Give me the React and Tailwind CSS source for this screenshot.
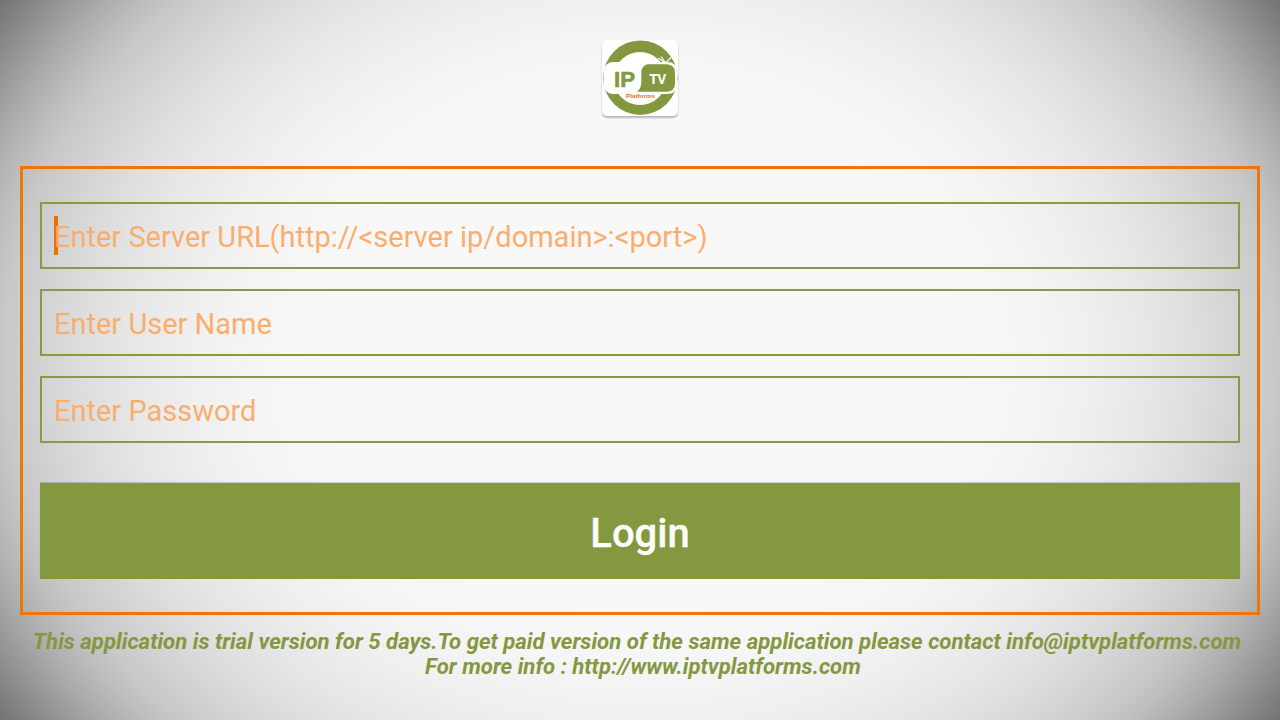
import React, { useState } from "react";

const FIELDS = [
  { name: "server", type: "text", placeholder: "Enter Server URL(http://<server ip/domain>:<port>)" },
  { name: "username", type: "text", placeholder: "Enter User Name" },
  { name: "password", type: "password", placeholder: "Enter Password" },
];

function Logo() {
  return (
    <div className="h-[76px] w-[76px] overflow-hidden rounded-[5px] bg-white shadow-[0_2px_2px_rgba(0,0,0,0.25)]">
      <svg viewBox="0 0 76 76" className="h-full w-full" fontFamily="Liberation Sans, sans-serif" fontWeight="700">
        <circle cx="38.3" cy="37.7" r="37.2" fill="#84983f" />
        <circle cx="38" cy="38.5" r="26.5" fill="#fff" />
        <rect x="1.7" y="22" width="50" height="32" rx="9" fill="#fff" />
        <path d="M46 22 H65 Q75 22 75 31.5 V44 Q75 54 65 54 H34 Z" fill="#fff" />
        <path
          d="M56.5 18 L63.5 23 M59 16.5 L63 22 M70 16.5 L63.5 23"
          fill="none"
          stroke="#fff"
          strokeWidth="1.1"
        />
        <path
          d="M45.5 24.3 H64.5 Q73 24.8 73 32.5 V43.5 Q73 51.7 64 51.7 H35 Q39.3 48.5 39.3 42 V31 Q40 26 45.5 24.3 Z"
          fill="#84983f"
        />
        <text x="12" y="47" fontSize="22.5" textLength="21" lengthAdjust="spacingAndGlyphs" fill="#84983f" stroke="#84983f" strokeWidth="0.6">
          IP
        </text>
        <text x="47.5" y="44.3" fontSize="14" textLength="16.5" lengthAdjust="spacingAndGlyphs" fill="#fff" stroke="#fff" strokeWidth="0.2">
          TV
        </text>
        <text x="24" y="57.8" fontSize="6.2" textLength="29" lengthAdjust="spacingAndGlyphs" fill="#f26a24">
          Platforms
        </text>
      </svg>
    </div>
  );
}

export default function App() {
  const [form, setForm] = useState({ server: "", username: "", password: "" });

  function onChange(e) {
    setForm({ ...form, [e.target.name]: e.target.value });
  }

  return (
    <div className="flex h-[720px] w-[1280px] flex-col items-center overflow-hidden bg-[radial-gradient(777px_634px_at_center,#f8f8f8_0%,#f8f8f8_40%,#f5f5f5_49%,#f0f0f0_57%,#e6e6e6_66%,#dddddd_72%,#d3d3d3_77%,#c8c8c8_82%,#bebebe_85%,#a8a8a8_90%,#7e7e7e_98%,#747474_100%)] pt-10 font-[Roboto,sans-serif]">
      <Logo />

      <form
        onSubmit={(e) => e.preventDefault()}
        className="mt-[50px] flex h-[449px] w-[1240px] flex-col border-[3px] border-[#ee7608] px-[17px] pt-[33px]"
      >
        <div className="flex flex-col gap-5">
          {FIELDS.map((f) => (
            <div key={f.name} className="relative h-[67px] border-2 border-[#869b42]">
              {f.name === "server" && !form.server ? (
                <span className="absolute top-3 left-3 h-[39px] w-1 bg-[#ee7000]" />
              ) : null}
              <input
                name={f.name}
                type={f.type}
                value={form[f.name]}
                onChange={onChange}
                placeholder={f.placeholder}
                className="relative h-full w-full bg-transparent px-3 pt-[3px] text-[29px] text-[#ee7000] outline-none placeholder:text-[#f9ae6e]"
              />
            </div>
          ))}
        </div>

        <button
          type="submit"
          className="mt-10 h-24 bg-[#84983f] pt-1.5 text-[40px] font-medium text-white shadow-[0_-1px_1px_rgba(0,0,0,0.15)] [-webkit-text-stroke:0.3px_white]"
        >
          Login
        </button>
      </form>

      <div className="mt-[14px] text-center text-[22.18px] leading-[25px] font-bold whitespace-nowrap text-[#84983f] italic">
        <p className="pr-1.5">
          This application is trial version for 5 days.To get paid version of the same application please contact info@iptvplatforms.com
        </p>
        {/* the parent is as wide as the first line, padding included */}
        <p className="pl-1.5">For more info : http://www.iptvplatforms.com</p>
      </div>
    </div>
  );
}
